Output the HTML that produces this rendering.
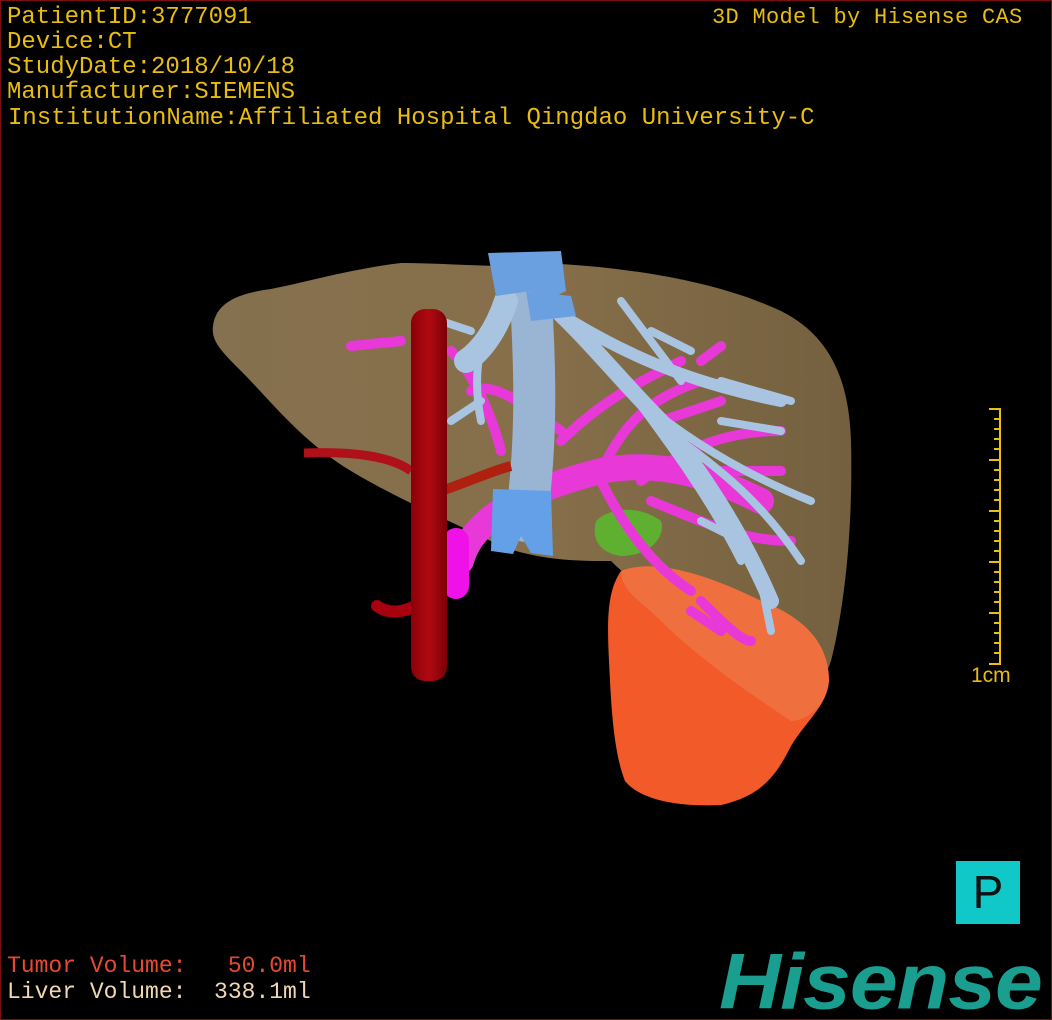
<!DOCTYPE html>
<html><head><meta charset="utf-8"><style>
html,body{margin:0;padding:0;background:#000;}
#c{position:relative;width:1050px;height:1018px;border:1px solid #7a1010;background:#000;overflow:hidden;font-family:"Liberation Mono",monospace;}
.t{position:absolute;white-space:pre;color:#e8bc10;font-size:24px;line-height:25px;}
</style></head><body><div id="c">
<svg width="1050" height="1018" style="position:absolute;left:0;top:0">
<defs>
<linearGradient id="lv" x1="0" y1="0" x2="1" y2="0"><stop offset="0" stop-color="#85704f"/><stop offset="0.5" stop-color="#876f4a"/><stop offset="1" stop-color="#74603f"/></linearGradient>
<linearGradient id="ao" x1="0" y1="0" x2="1" y2="0"><stop offset="0" stop-color="#8a0008"/><stop offset="0.5" stop-color="#b00a12"/><stop offset="1" stop-color="#7a0006"/></linearGradient>
</defs>
<path d="M212,325 C215,300 240,292 270,288 C310,280 350,268 400,262 C450,262 500,268 560,263 C640,268 720,282 780,310 C830,335 848,380 850,440 C852,520 845,600 830,660 C820,690 800,700 780,700 L700,640 C660,600 630,580 610,560 C580,560 540,560 500,545 C450,520 400,500 350,470 C300,440 270,400 240,370 C220,350 210,340 212,325 Z" fill="url(#lv)"/>
<path d="M620,570 C650,558 700,570 760,600 C800,615 828,640 828,680 C826,705 805,720 790,745 C775,775 760,795 720,804 C680,806 640,800 624,780 C612,750 610,700 608,660 C606,620 606,590 620,570 Z" fill="#f25a2a"/>
<path d="M620,570 C650,558 700,570 760,600 C800,615 828,640 828,680 C826,705 805,720 790,720 C760,700 700,660 660,620 C640,600 620,590 620,570 Z" fill="#f07848" opacity="0.7"/>
<path d="M595,520 C610,505 640,505 660,520 C665,535 650,555 620,555 C600,552 590,540 595,520Z" fill="#5fb030"/>
<g stroke="#e838d8" stroke-linecap="round" fill="none">
<path d="M460,560 C470,520 520,490 600,470 C650,460 700,470 760,500" stroke-width="26"/>
<path d="M455,585 L455,540" stroke="#f010e8" stroke-width="26"/>
<path d="M470,390 C490,380 520,400 560,430 M600,470 C620,430 640,400 700,380 M640,480 C680,450 720,430 780,430 M650,500 C700,520 740,540 790,540 M600,480 C630,540 660,570 690,590 M500,450 C490,410 470,370 450,350 M700,600 C720,620 740,640 750,640 M350,345 L400,340 M560,440 C600,400 640,380 680,360 M700,360 L720,345 M660,420 L720,400 M700,470 L780,470 M690,610 L720,630" stroke-width="10"/>
</g>
<g stroke="#a8c4e0" stroke-linecap="round" fill="none">
<path d="M545,300 C580,330 620,380 660,420 C700,470 740,530 770,600" stroke-width="16"/>
<path d="M570,320 C620,350 680,380 780,400" stroke-width="12"/>
<path d="M600,350 C650,420 700,480 740,560 M640,400 C700,450 760,480 810,500 M680,440 C720,470 760,500 800,560 M720,420 L780,430 M650,330 L690,350 M500,300 C480,330 470,370 480,420 M470,330 L440,320 M480,400 L450,420 M760,580 L770,630 M700,520 L740,540 M620,300 L680,380 M720,380 L790,400" stroke-width="8"/>
<path d="M530,300 C535,380 535,450 525,520" stroke="#9ab4d4" stroke-width="42"/>
<path d="M505,300 C495,330 480,350 465,360" stroke-width="24"/>
</g>
<path d="M487,252 L560,250 L565,290 L545,300 L530,290 L495,295 Z" fill="#6aa0e0"/>
<path d="M525,290 L570,295 L575,315 L530,320 Z" fill="#6aa0e0"/>
<path d="M492,488 L550,490 L552,555 L530,552 L520,535 L512,553 L490,550 Z" fill="#64a0e8"/>
<path d="M303,452 C350,450 390,455 410,470" stroke="#b0101a" stroke-width="9" fill="none"/>
<path d="M376,605 C390,615 410,610 420,600" stroke="#a8000e" stroke-width="12" fill="none" stroke-linecap="round"/>
<path d="M440,490 C470,480 490,470 510,465" stroke="#b02010" stroke-width="10" fill="none"/>
<rect x="410" y="308" width="36" height="372" rx="14" fill="url(#ao)"/>
<g stroke="#e8c010" stroke-width="2">
<line x1="999" y1="407" x2="999" y2="664"/>
<line x1="988" y1="408" x2="999" y2="408"/><line x1="988" y1="459" x2="999" y2="459"/><line x1="988" y1="510" x2="999" y2="510"/><line x1="988" y1="561" x2="999" y2="561"/><line x1="988" y1="612" x2="999" y2="612"/><line x1="988" y1="663" x2="999" y2="663"/>
<path d="M993,418H999M993,428H999M993,438H999M993,448H999M993,469H999M993,479H999M993,489H999M993,499H999M993,520H999M993,530H999M993,540H999M993,550H999M993,571H999M993,581H999M993,591H999M993,601H999M993,622H999M993,632H999M993,642H999M993,652H999"/>
</g>
</svg>
<div class="t" style="left:6px;top:4px">PatientID:3777091</div>
<div class="t" style="left:6px;top:29px">Device:CT</div>
<div class="t" style="left:6px;top:54px">StudyDate:2018/10/18</div>
<div class="t" style="left:6px;top:79px">Manufacturer:SIEMENS</div>
<div class="t" style="left:7px;top:105px">InstitutionName:Affiliated Hospital Qingdao University-C</div>
<div class="t" style="left:711px;top:4px;font-size:22px;letter-spacing:0.3px">3D Model by Hisense CAS</div>
<div class="t" style="left:970px;top:662px;font-family:'Liberation Sans',sans-serif;font-size:21px">1cm</div>
<div class="t" style="left:6px;top:953px;font-size:23px;color:#e84a30">Tumor Volume:   50.0ml</div>
<div class="t" style="left:6px;top:979px;font-size:23px;color:#f0d8b0">Liver Volume:  338.1ml</div>
<div style="position:absolute;left:955px;top:860px;width:64px;height:63px;background:#10c8c8;color:#111;font-family:'Liberation Sans',sans-serif;font-size:46px;line-height:63px;text-align:center">P</div>
<div style="position:absolute;left:718px;top:932px;color:#1a9e90;font-family:'Liberation Sans',sans-serif;font-weight:bold;font-style:italic;font-size:86px;line-height:90px;letter-spacing:-1px;white-space:nowrap;transform:scaleY(0.92);transform-origin:0 100%">Hisense</div>
</div></body></html>
